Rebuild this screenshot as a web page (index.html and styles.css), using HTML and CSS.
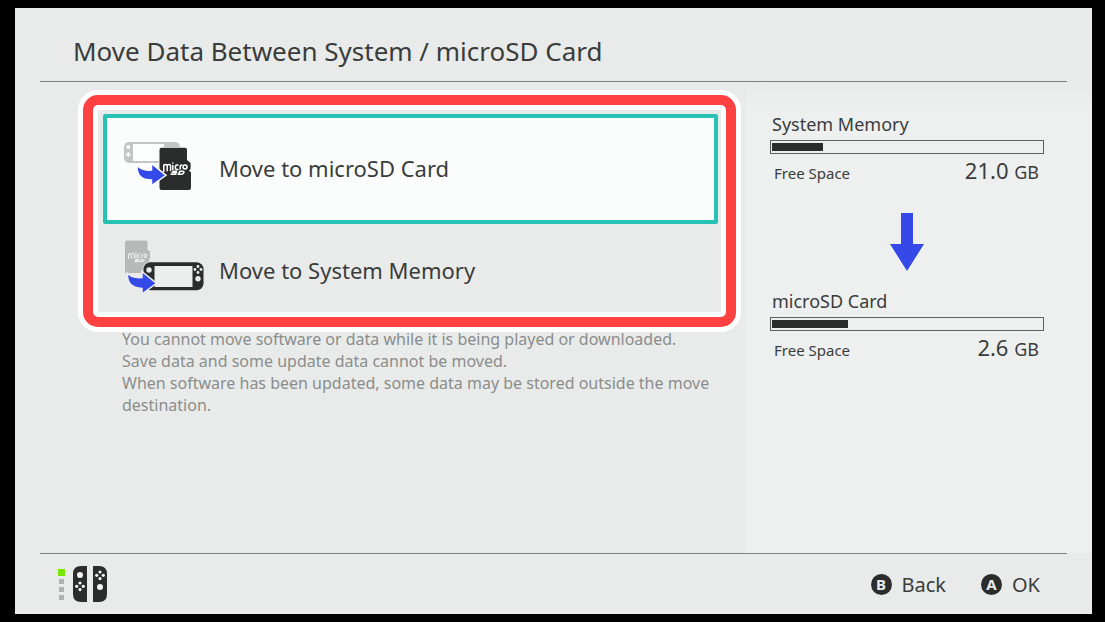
FILE: index.html
```html
<!DOCTYPE html>
<html lang="en">
  <head>
    <meta charset="UTF-8" />
    <meta name="viewport" content="width=device-width, initial-scale=1.0" />
    <title>Move Data Between System / microSD Card</title>
    <link rel="stylesheet" href="styles.css">
  </head>
  <body>
    <div class="screen">
      <header class="header">
        <h1>Move Data Between System / microSD Card</h1>
      </header>

      <main class="content">
        <section class="choices">
          <div class="highlight">
            <button type="button" class="option selected">
              <svg class="option-icon" viewBox="0 0 80 60" aria-hidden="true">
                <rect x="0" y="4" width="56" height="21" rx="5" fill="#c3c5c4" />
                <rect x="9" y="6" width="31" height="17" fill="#fcfefd" />
                <circle cx="4.300" cy="9" r="2" fill="#fcfefd" />
                <path d="M4.300 14v5M1.800 16.500h5" stroke="#fcfefd" stroke-width="1.600" />
                <path d="M37.500 9.700H61a2 2 0 0 1 2 2V22l3.600 3v6l-1.600 1.500 2 2V50a2 2 0 0 1-2 2H37.500a2 2 0 0 1-2-2V11.700a2 2 0 0 1 2-2z" fill="#2b2d2c" stroke="#fcfefd" stroke-width="1.600" paint-order="stroke" />
                <g fill="none" stroke="#fff" stroke-width="1.500">
                  <path d="M39.800 34v-7.500M39.800 28q0-1.500 1.700-1.500t1.700 1.500v5.200M43.200 28q0-1.500 1.700-1.500t1.700 1.500v5.200M48.800 27v5.200M48.800 24.500v1.300M54.500 27h-1.500q-1.700 0-1.700 2.300t1.700 2.300h1.500M56.200 31.500v-3q0-1.500 2.200-1.500" />
                  <ellipse cx="61" cy="29" rx="2" ry="1.900" />
                  <path d="M53 33.300h-3.500l-1 1.300h4l-1 1.600h-5M54.500 36.200l1.500-2.900h2.500q2 0 1.300 1.500t-2.800 1.400z" />
                </g>
                <path d="M13 27q4.500 6 14.500 5v-6.500L42 37.300 27.500 47.500v-5.500Q12 42 13 27z" fill="#3548e8" stroke="#fcfefd" stroke-width="1.500" />
              </svg>
              <span>Move to microSD Card</span>
            </button>
            <button type="button" class="option">
              <svg class="option-icon" viewBox="0 0 80 60" aria-hidden="true">
                <path d="M3 .5h18.500a2 2 0 0 1 2 2V9.500l2.500 2v7l-1.500 1.500 1 1.500V33H1V2.500a2 2 0 0 1 2-2z" fill="#b7b9b8" />
                <g fill="none" stroke="#eceeed" stroke-width="1.200">
                  <path d="M4.600 19v-5.500M4.600 14.500q0-1 1.400-1t1.400 1v4M7.400 14.500q0-1 1.400-1t1.400 1v4M12 14v4.500M12 12v1M16.300 14h-1q-1.500 0-1.500 1.800t1.500 1.700h1M17.800 18v-2.500q0-1.500 1.500-1.500" />
                  <ellipse cx="21.500" cy="15.700" rx="1.400" ry="1.600" />
                  <path d="M15 19.500h-3l-.5 1h3l-1 1.200h-3M16 21.700l1-2.200h2q1.500 0 1 1.100t-2 1.100z" />
                </g>
                <rect x="18.500" y="21.500" width="61.500" height="30" rx="8" fill="#e9ebea" />
                <rect x="19.500" y="22.300" width="60" height="28" rx="7" fill="#2b2d2c" />
                <rect x="30.500" y="26" width="38" height="21" fill="#eceeed" />
                <circle cx="25" cy="30" r="2.700" fill="#eceeed" />
                <circle cx="74" cy="38.700" r="2.700" fill="#eceeed" />
                <g fill="#eceeed">
                  <circle cx="74" cy="26.500" r="1.400" />
                  <circle cx="74" cy="32.500" r="1.400" />
                  <circle cx="71" cy="29.500" r="1.400" />
                  <circle cx="77" cy="29.500" r="1.400" />
                </g>
                <path d="M3.500 33q4.500 5.500 14.500 4.500v-6L32.500 43.300 18 54V48.500Q2.500 48 3.500 33z" fill="#3548e8" stroke="#e9ebea" stroke-width="1.500" />
              </svg>
              <span>Move to System Memory</span>
            </button>
          </div>
          <p class="notes">
            You cannot move software or data while it is being played or downloaded.<br>
            Save data and some update data cannot be moved.<br>
            When software has been updated, some data may be stored outside the move destination.
          </p>
        </section>

        <aside class="storage">
          <section class="drive">
            <h2>System Memory</h2>
            <div class="bar"><div class="used" style="width: 19%"></div></div>
            <div class="free">
              <span class="label">Free Space</span>
              <span class="amount">21.0 <small>GB</small></span>
            </div>
          </section>
          <svg class="arrow" viewBox="0 0 34 58" aria-hidden="true">
            <path d="M11 0h12v31h11L17 58 0 31h11z" fill="#3548e8" />
          </svg>
          <section class="drive">
            <h2>microSD Card</h2>
            <div class="bar"><div class="used" style="width: 28%"></div></div>
            <div class="free">
              <span class="label">Free Space</span>
              <span class="amount">2.6 <small>GB</small></span>
            </div>
          </section>
        </aside>
      </main>

      <footer class="footer">
        <div class="controller">
          <div class="players">
            <i class="on"></i>
            <i></i>
            <i></i>
            <i></i>
          </div>
          <svg class="joycons" viewBox="0 0 34 36" aria-hidden="true">
            <path d="M14 0v36H8q-8 0-8-8V8q0-8 8-8zM20 0v36h6q8 0 8-8V8q0-8-8-8z" fill="#2b2d2c" />
            <g fill="#f4f6f5">
              <circle cx="7" cy="9" r="3" />
              <circle cx="7" cy="17" r="1.600" />
              <circle cx="7" cy="23.600" r="1.600" />
              <circle cx="3.700" cy="20.300" r="1.600" />
              <circle cx="10.300" cy="20.300" r="1.600" />
              <circle cx="27" cy="21" r="3" />
              <circle cx="27" cy="6" r="1.600" />
              <circle cx="27" cy="12.600" r="1.600" />
              <circle cx="23.700" cy="9.300" r="1.600" />
              <circle cx="30.300" cy="9.300" r="1.600" />
            </g>
          </svg>
        </div>
        <nav class="actions">
          <button type="button"><b>B</b>Back</button>
          <button type="button"><b>A</b>OK</button>
        </nav>
      </footer>
    </div>
  </body>
</html>
```

FILE: styles.css
```css
* {
  box-sizing: border-box;
  padding: 0;
  margin: 0;
}
body {
  display: flex;
  min-height: 100vh;
  padding: 8px 13px 8px 15px;
  background-color: #000;
  color: #3a3c3b;
  font-family: "Noto Sans", "Open Sans", sans-serif;
}
button {
  border: 0;
  background: none;
  color: inherit;
  font-family: inherit;
  cursor: pointer;
}
svg {
  display: block;
  flex: none;
}
h1,
h2 {
  font-weight: normal;
}
.screen {
  flex: 1;
  display: flex;
  flex-direction: column;
  background-color: #e9ebea;
}
.header {
  margin: 0 25px;
  padding: 24px 33px 0;
  height: 74px;
  border-bottom: 1px solid #808281;
}
.header h1 {
  font-size: 26px;
  line-height: 38px;
}
.content {
  flex: 1;
  display: grid;
  grid-template-columns: 1fr 346px;
}
.choices {
  padding: 13px 10px 0 68px;
}

/* red callout with a white edge on both sides */
.highlight {
  padding: 9px 8px 0 10px;
  border: 10px solid #ff4141;
  border-radius: 15px;
  box-shadow: 0 0 0 5px #fff, inset 0 0 0 5px #fff;
}
.option {
  display: flex;
  align-items: center;
  gap: 15px;
  width: 100%;
  height: 93px;
  padding: 0 21px 2px;
  font-size: 22px;
  text-align: left;
}
.option.selected {
  height: 110px;
  padding: 0 17px 2px;
  border: 4px solid #26c2b3;
  border-radius: 2px;
  background-color: #fbfdfc;
}
.option-icon {
  width: 80px;
  height: 60px;
}
.notes {
  padding: 1px 0 0 39px;
  color: #8b8d8c;
  font-size: 16px;
  line-height: 22px;
}
.storage {
  padding: 28px 48px 0 24px;
  background: linear-gradient(#e9ebea, #eef0ef 30px);
}
.drive h2 {
  padding-left: 2px;
  font-size: 18px;
  line-height: 28px;
}
.bar {
  height: 14px;
  margin-top: 2px;
  padding: 2px 1px;
  border: 1px solid #5f6160;
}
.used {
  height: 100%;
  background-color: #2b2d2c;
}
.free {
  display: flex;
  justify-content: space-between;
  align-items: baseline;
  padding: 2px 5px 0 4px;
  line-height: 28px;
}
.label {
  font-size: 15px;
}
.amount {
  font-size: 22px;
}
.amount small {
  font-size: 18px;
}
.arrow {
  width: 34px;
  height: 58px;
  margin: 26px auto 16px;
}
.footer {
  display: flex;
  justify-content: space-between;
  align-items: center;
  height: 61px;
  margin: 0 25px;
  padding: 0 27px 0 18px;
  border-top: 1px solid #808281;
}
.controller {
  display: flex;
  align-items: center;
  gap: 8px;
}
.players {
  display: flex;
  flex-direction: column;
  align-items: center;
  gap: 3px;
}
.players i {
  width: 5px;
  height: 5px;
  background-color: #b0b2b1;
}
.players .on {
  width: 7px;
  height: 7px;
  background-color: #7be600;
}
.joycons {
  width: 34px;
  height: 36px;
}
.actions {
  display: flex;
  gap: 35px;
}
.actions button {
  display: flex;
  align-items: center;
  gap: 10px;
  font-size: 20px;
}
.actions b {
  width: 21px;
  height: 21px;
  border-radius: 50%;
  background-color: #2b2d2c;
  color: #e9ebea;
  font-size: 15px;
  line-height: 21px;
  text-align: center;
}
```
